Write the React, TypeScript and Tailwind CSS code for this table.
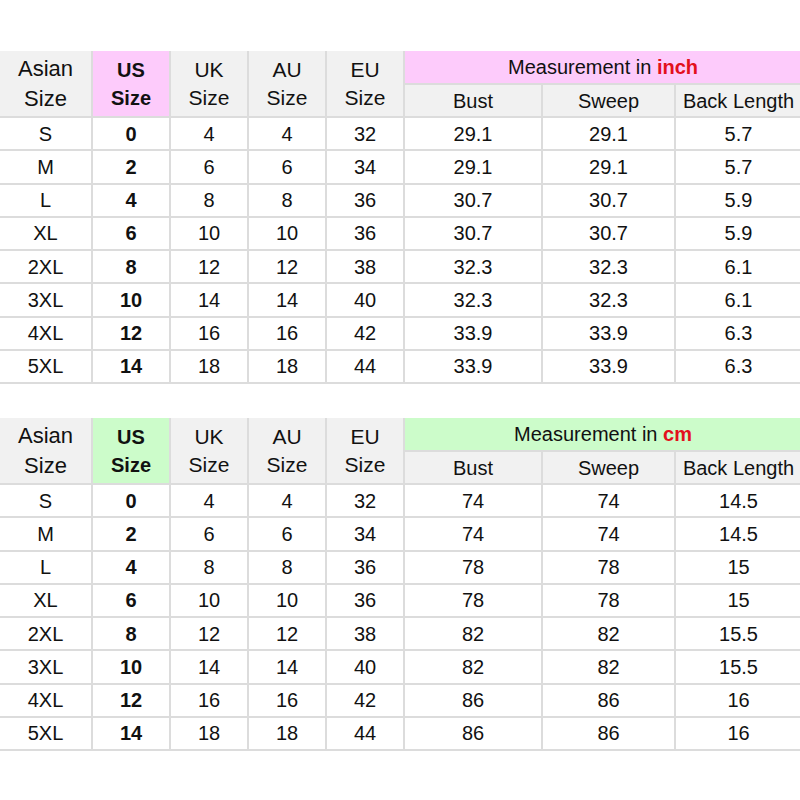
import React from "react";

type Unit = { label: string; tint: string; rows: string[][] };

const sizes = [
  ["S", "0", "4", "4", "32"],
  ["M", "2", "6", "6", "34"],
  ["L", "4", "8", "8", "36"],
  ["XL", "6", "10", "10", "36"],
  ["2XL", "8", "12", "12", "38"],
  ["3XL", "10", "14", "14", "40"],
  ["4XL", "12", "16", "16", "42"],
  ["5XL", "14", "18", "18", "44"],
];

const inch = [
  ["29.1", "29.1", "5.7"],
  ["29.1", "29.1", "5.7"],
  ["30.7", "30.7", "5.9"],
  ["30.7", "30.7", "5.9"],
  ["32.3", "32.3", "6.1"],
  ["32.3", "32.3", "6.1"],
  ["33.9", "33.9", "6.3"],
  ["33.9", "33.9", "6.3"],
];

const cm = [
  ["74", "74", "14.5"],
  ["74", "74", "14.5"],
  ["78", "78", "15"],
  ["78", "78", "15"],
  ["82", "82", "15.5"],
  ["82", "82", "15.5"],
  ["86", "86", "16"],
  ["86", "86", "16"],
];

const tables: Unit[] = [
  { label: "inch", tint: "bg-[#fdcbfb]", rows: inch },
  { label: "cm", tint: "bg-[#ccfcca]", rows: cm },
];

const cell = "border-2 border-[#dcdcdc] p-0 text-center align-middle";

function SizeTable({ label, tint, rows }: Unit) {
  return (
    <table className="w-[802px] -ml-[2px] table-fixed border-collapse text-[#111]">
      <colgroup>
        <col className="w-[93px]" />
        <col className="w-[78px]" />
        <col className="w-[78px]" />
        <col className="w-[78px]" />
        <col className="w-[78px]" />
        <col className="w-[138px]" />
        <col className="w-[133px]" />
        <col className="w-[126px]" />
      </colgroup>
      <thead>
        <tr className="h-[33px]">
          <th rowSpan={2} className={`${cell} border-t-0 bg-[#f1f1f1] text-[22px] font-normal leading-[30px]`}>
            Asian
            <br />
            Size
          </th>
          <th rowSpan={2} className={`${cell} border-t-0 ${tint} text-[20px] font-bold leading-[28px]`}>
            US
            <br />
            Size
          </th>
          {["UK", "AU", "EU"].map((h) => (
            <th key={h} rowSpan={2} className={`${cell} border-t-0 bg-[#f1f1f1] text-[21px] font-normal leading-[28px]`}>
              {h}
              <br />
              Size
            </th>
          ))}
          <th colSpan={3} className={`${cell} border-t-0 border-r-0 ${tint} text-[20px] font-normal`}>
            Measurement in <span className="font-bold text-[#e3101c]">{label}</span>
          </th>
        </tr>
        <tr className="h-[33px]">
          {["Bust", "Sweep", "Back Length"].map((h) => (
            <th key={h} className={`${cell} border-r-0 bg-[#f1f1f1] text-[20px] font-normal`}>
              {h}
            </th>
          ))}
        </tr>
      </thead>
      <tbody>
        {sizes.map((s, i) => (
          <tr key={s[0]} className="h-[33.25px]">
            {[...s, ...rows[i]].map((v, j) => (
              <td
                key={j}
                className={`${cell} ${j === 1 ? "text-[20px] font-bold" : "text-[20px]"} ${j === 7 ? "border-r-0" : ""}`}
              >
                {v}
              </td>
            ))}
          </tr>
        ))}
      </tbody>
    </table>
  );
}

export default function App() {
  return (
    <div className="h-[800px] w-[800px] overflow-hidden bg-white pt-[51px] font-['Liberation_Sans',Arial,sans-serif]">
      <div className="flex flex-col gap-[34px]">
        {tables.map((t) => (
          <SizeTable key={t.label} {...t} />
        ))}
      </div>
    </div>
  );
}
